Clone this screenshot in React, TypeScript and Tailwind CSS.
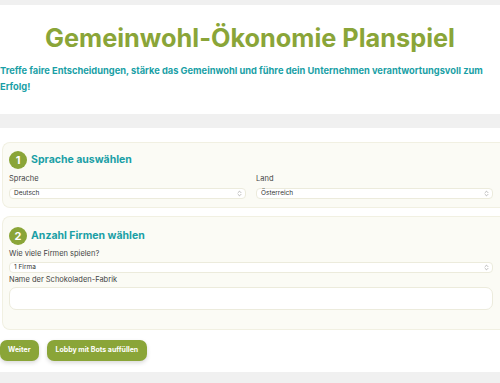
import { ChevronsUpDown } from "lucide-react";

function Step({ n, title }: { n: number; title: string }) {
  return (
    <div className="flex items-center gap-[4px]">
      <div className="flex h-[18px] w-[18px] items-center justify-center rounded-full bg-[#8aa538] text-[11px] font-bold text-white">
        {n}
      </div>
      <h2 className="text-[10.5px] font-bold text-[#1a9fa6]">{title}</h2>
    </div>
  );
}

function Select({ value }: { value: string }) {
  return (
    <div className="flex h-[11px] items-center justify-between rounded-[4px] border border-[#ecebdc] bg-white pl-[4px] pr-[2px] text-[6.5px] text-[#333]">
      <span>{value}</span>
      <ChevronsUpDown className="h-[7px] w-[7px] text-[#888]" strokeWidth={2} />
    </div>
  );
}

export default function App() {
  return (
    <div className="min-h-[383px] bg-[#f0f0f0] pt-[5px] font-['Inter',sans-serif]">
      <header className="h-[109px] bg-white pt-[17px]">
        <h1 className="text-center text-[25.3px] font-bold leading-[32px] text-[#8aa538]">
          Gemeinwohl-Ökonomie Planspiel
        </h1>
        <p className="mt-[9px] pr-[8px] text-[9.3px] font-bold leading-[16px] text-[#1a9fa6]">
          Treffe faire Entscheidungen, stärke das Gemeinwohl und führe dein Unternehmen verantwortungsvoll zum Erfolg!
        </p>
      </header>
      <main className="mt-[14px] bg-white pt-[14px] pb-[11px]">
        <section className="ml-[2px] rounded-l-[8px] border border-r-0 border-[#f1f0e2] bg-[#fbfbf5] px-[6px] pt-[8px] pb-[8px]">
          <Step n={1} title="Sprache auswählen" />
          <div className="mt-[5px] grid grid-cols-2 gap-[10px] pr-[1px]">
            <div>
              <div className="mb-[4px] text-[7.5px] leading-[10px] text-[#444]">Sprache</div>
              <Select value="Deutsch" />
            </div>
            <div>
              <div className="mb-[4px] text-[7.5px] leading-[10px] text-[#444]">Land</div>
              <Select value="Österreich" />
            </div>
          </div>
        </section>
        <section className="mt-[8px] ml-[2px] rounded-l-[8px] border border-r-0 border-[#f1f0e2] bg-[#fbfbf5] px-[6px] pt-[10px] pb-[19px]">
          <Step n={2} title="Anzahl Firmen wählen" />
          <div className="mt-[4px] pr-[1px]">
            <div className="mb-[3px] text-[7.5px] leading-[10px] text-[#444]">Wie viele Firmen spielen?</div>
            <Select value="1 Firma" />
            <div className="mt-[2px] mb-[2px] text-[7.5px] leading-[10px] text-[#444]">Name der Schokoladen-Fabrik</div>
            <div className="h-[23px] rounded-[7px] border border-[#ecebdc] bg-white" />
          </div>
        </section>
        <div className="mt-[10px] flex gap-[8px]">
          <button className="h-[21px] rounded-[7px] bg-[#8aa538] px-[8px] text-[7px] font-bold text-white shadow-[0_2px_4px_rgba(0,0,0,0.15)]">
            Weiter
          </button>
          <button className="h-[21px] rounded-[7px] bg-[#8aa538] px-[9px] text-[7px] font-bold text-white shadow-[0_2px_4px_rgba(0,0,0,0.15)]">
            Lobby mit Bots auffüllen
          </button>
        </div>
      </main>
    </div>
  );
}
